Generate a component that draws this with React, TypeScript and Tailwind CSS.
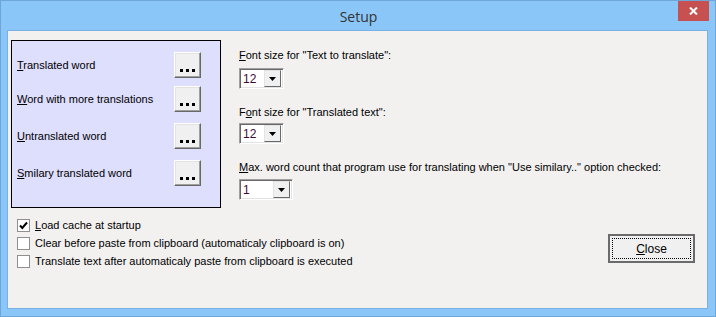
import React from "react";

const COLOURS = [
  { key: "T", rest: "ranslated word", top: 11 },
  { key: "W", rest: "ord with more translations", top: 8 },
  { key: "U", rest: "ntranslated word", top: 11 },
  { key: "S", rest: "milary translated word", top: 11 },
];

const DotsButton = () => (
  <div className="w-[27px] h-[26px] bg-[#f0f0f0] border border-t-white border-l-white border-r-[#696969] border-b-[#696969] shadow-[inset_-1px_-1px_0_#a0a0a0,inset_1px_1px_0_#e3e3e3] flex items-end justify-center pb-[5px]">
    <div className="flex gap-[3px]">
      <span className="w-[3px] h-[3px] bg-black" />
      <span className="w-[3px] h-[3px] bg-black" />
      <span className="w-[3px] h-[3px] bg-black" />
    </div>
  </div>
);

const Combo = ({ value, width }: { value: string; width: string }) => (
  <div className={`${width} h-[21px] bg-white border border-t-[#a0a0a0] border-l-[#a0a0a0] border-r-white border-b-white shadow-[inset_1px_1px_0_#696969,inset_-1px_-1px_0_#e3e3e3] flex items-center pl-[3px] pr-[2px]`}>
    <span className="flex-1 text-[12px] text-[#3c0a3c]">{value}</span>
    <div className="w-[17px] h-[17px] bg-[#f0f0f0] border border-t-[#e3e3e3] border-l-[#e3e3e3] border-r-[#696969] border-b-[#696969] flex items-center justify-center">
      <svg width="7" height="4" viewBox="0 0 7 4">
        <path d="M0 0h7L3.5 4z" fill="#000" />
      </svg>
    </div>
  </div>
);

const CheckBox = ({ checked }: { checked?: boolean }) => (
  <div className="w-[13px] h-[13px] bg-white border border-[#8f8f8f] flex items-center justify-center shrink-0">
    {checked && (
      <svg width="9" height="9" viewBox="0 0 9 9">
        <path d="M1 4.5l2.3 2.5L8 1.5" stroke="#000" strokeWidth="2" fill="none" />
      </svg>
    )}
  </div>
);

export default function App() {
  return (
    <div className="w-[716px] h-[317px] bg-[#8bc6f8] border border-[#6fa6da] flex flex-col font-['Liberation_Sans',Arial,sans-serif] text-[11px] text-black overflow-hidden">
      {/* title bar */}
      <div className="h-[29px] shrink-0 flex items-start">
        <div className="flex-1 pt-[5px] text-center text-[14px] text-[#333] font-['Open_Sans',sans-serif] pl-[38px]">Setup</div>
        <div className="w-[31px] h-[20px] bg-[#c75050] mr-[6px] flex items-center justify-center">
          <svg width="9" height="8" viewBox="0 0 9 8">
            <path d="M1 0.5l7 7M8 0.5l-7 7" stroke="#fff" strokeWidth="2" />
          </svg>
        </div>
      </div>

      {/* client area */}
      <div className="ml-[6px] mr-[7px] mb-[7px] flex-1 bg-[#f2f1f0] border border-[#79b0e6] flex flex-col">
        <div className="flex pt-[9px] pl-[3px]">
          <div className="w-[210px] h-[168px] bg-[#dedefd] border border-black flex flex-col pl-[5px] pr-[19px]">
            {COLOURS.map((c) => (
              <div key={c.key} className="flex items-center justify-between" style={{ marginTop: c.top }}>
                <span>
                  <span className="underline">{c.key}</span>
                  {c.rest}
                </span>
                <DotsButton />
              </div>
            ))}
          </div>

          <div className="ml-[18px] flex flex-col">
            <div className="mt-[9px] leading-[13px]">
              <span className="underline">F</span>ont size for "Text to translate":
            </div>
            <div className="mt-[6px]">
              <Combo value="12" width="w-[45px]" />
            </div>
            <div className="mt-[17px] leading-[13px]">
              F<span className="underline">o</span>nt size for "Translated text":
            </div>
            <div className="mt-[4px]">
              <Combo value="12" width="w-[45px]" />
            </div>
            <div className="mt-[17px] leading-[13px]">
              <span className="underline">M</span>ax. word count that program use for translating when "Use similary.." option checked:
            </div>
            <div className="mt-[5px]">
              <Combo value="1" width="w-[54px]" />
            </div>
          </div>
        </div>

        <div className="flex mt-[11px] pl-[9px]">
          <div className="flex flex-col gap-[5px]">
            <label className="flex items-center gap-[5px] h-[13px]">
              <CheckBox checked />
              <span>
                <span className="underline">L</span>oad cache at startup
              </span>
            </label>
            <label className="flex items-center gap-[5px] h-[13px]">
              <CheckBox />
              <span>Clear before paste from clipboard (automaticaly clipboard is on)</span>
            </label>
            <label className="flex items-center gap-[5px] h-[13px]">
              <CheckBox />
              <span>Translate text after automaticaly paste from clipboard is executed</span>
            </label>
          </div>

          <div className="ml-auto mr-[12px] mt-[15px] w-[87px] h-[29px] border-2 border-[#6b6b6b] bg-[#f0f0f0] p-[2px]">
            <div className="w-full h-full border border-dotted border-black flex items-center justify-center text-[12px]">
              <span>
                <span className="underline">C</span>lose
              </span>
            </div>
          </div>
        </div>
      </div>
    </div>
  );
}
